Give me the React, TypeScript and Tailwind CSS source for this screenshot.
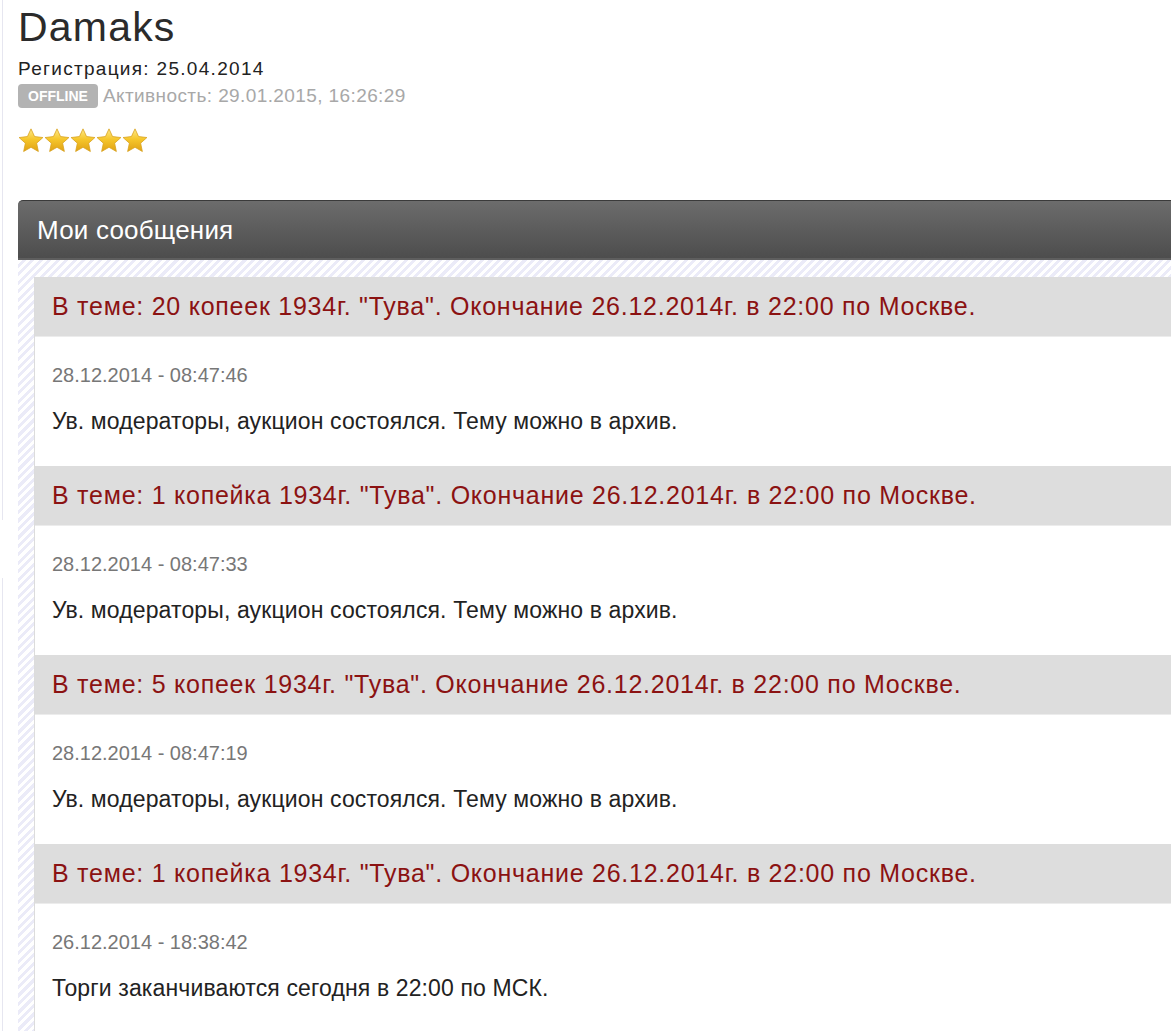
const posts = [
  {
    topic: 'В теме: 20 копеек 1934г. "Тува". Окончание 26.12.2014г. в 22:00 по Москве.',
    date: '28.12.2014 - 08:47:46',
    text: 'Ув. модераторы, аукцион состоялся. Тему можно в архив.',
  },
  {
    topic: 'В теме: 1 копейка 1934г. "Тува". Окончание 26.12.2014г. в 22:00 по Москве.',
    date: '28.12.2014 - 08:47:33',
    text: 'Ув. модераторы, аукцион состоялся. Тему можно в архив.',
  },
  {
    topic: 'В теме: 5 копеек 1934г. "Тува". Окончание 26.12.2014г. в 22:00 по Москве.',
    date: '28.12.2014 - 08:47:19',
    text: 'Ув. модераторы, аукцион состоялся. Тему можно в архив.',
  },
  {
    topic: 'В теме: 1 копейка 1934г. "Тува". Окончание 26.12.2014г. в 22:00 по Москве.',
    date: '26.12.2014 - 18:38:42',
    text: 'Торги заканчиваются сегодня в 22:00 по МСК.',
  },
]

function Star() {
  return (
    <svg width="26" height="26" viewBox="0 0 24 24">
      <defs>
        <linearGradient id="starFill" x1="0" y1="0" x2="0" y2="1">
          <stop offset="0" stopColor="#fde98c" />
          <stop offset="0.45" stopColor="#f6c72c" />
          <stop offset="1" stopColor="#e0a114" />
        </linearGradient>
      </defs>
      <path
        d="M12 0.8l3.3 7.1 7.7.9-5.8 5.2 1.6 7.7L12 17.8l-6.8 3.9 1.6-7.7L1 8.8l7.7-.9z"
        fill="url(#starFill)"
        stroke="#d8a01a"
        strokeWidth="0.7"
        strokeLinejoin="round"
      />
    </svg>
  )
}

export default function App() {
  return (
    <div className="flex h-[1031px] overflow-hidden bg-white font-['Liberation_Sans',Arial,sans-serif]">
      {/* faint sidebar edge */}
      <div className="w-[18px] shrink-0">
        <div className="ml-[2px] h-[520px] w-px bg-[#e6e6f0]" />
        <div className="ml-[2px] mt-[58px] h-[460px] w-px bg-[#e6e6f0]" />
      </div>

      <div className="min-w-0 flex-1">
        {/* Profile */}
        <div className="pt-[6px]">
          <h1 className="text-[41px] leading-[42px] tracking-[1.2px] text-[#2b2b2b]">Damaks</h1>
          <p className="mt-[10px] text-[19px] leading-[22px] tracking-[1.3px] text-[#222]">Регистрация: 25.04.2014</p>
          <div className="mt-[4px] flex items-center gap-[5px]">
            <span className="flex h-[24px] w-[80px] items-center justify-center rounded-[4px] bg-[#b3b3b3] text-[14px] font-bold text-white">
              OFFLINE
            </span>
            <span className="text-[19px] leading-[22px] tracking-[0.4px] text-[#a8a8a8]">Активность: 29.01.2015, 16:26:29</span>
          </div>
          <div className="mt-[20px] flex">
            {[0, 1, 2, 3, 4].map((i) => (
              <Star key={i} />
            ))}
          </div>
        </div>

        {/* Messages panel */}
        <div className="mt-[46px]">
          <div className="flex h-[60px] items-center rounded-tl-[5px] border-t border-[#3a3a3a] bg-gradient-to-b from-[#6c6c6c] to-[#4c4c4c] pl-[19px] shadow-[inset_0_-2px_0_#5e5e5e]">
            <h2 className="text-[26px] tracking-[0.2px] text-white">Мои сообщения</h2>
          </div>
          <div className="bg-[repeating-linear-gradient(135deg,#ffffff_0px,#ffffff_3px,#ebebf8_3px,#ebebf8_6px)] pl-[16px] pt-[17px]">
            {posts.map((p, i) => (
              <div key={i} className="border-l border-[#dcdcdc] bg-white">
                <div className="flex h-[60px] items-center border-b border-[#ececec] bg-[#dddddd] pl-[17px]">
                  <span className="whitespace-nowrap text-[25px] tracking-[0.75px] text-[#8b1212]">{p.topic}</span>
                </div>
                <div className="pl-[17px] pt-[26px] pb-[33px]">
                  <p className="text-[20px] leading-[24px] text-[#777]">{p.date}</p>
                  <p className="mt-[22px] text-[23px] leading-[24px] tracking-[0.13px] text-[#222]">{p.text}</p>
                </div>
              </div>
            ))}
          </div>
        </div>
      </div>
    </div>
  )
}
